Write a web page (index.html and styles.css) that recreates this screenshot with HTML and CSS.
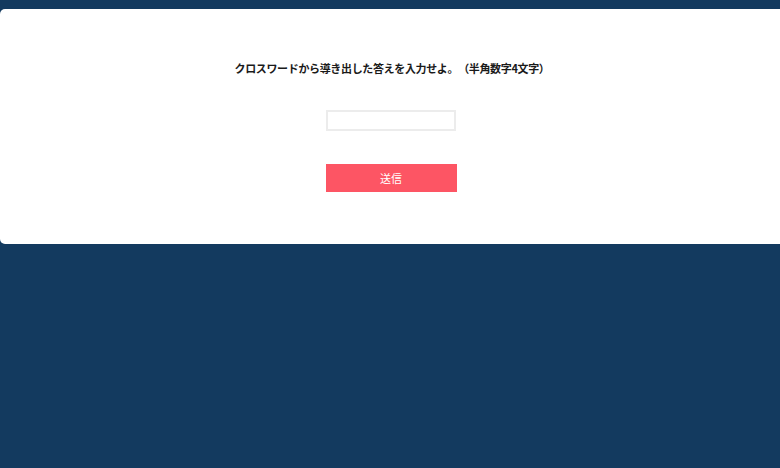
FILE: index.html
```html
<!DOCTYPE html>
<html lang="ja">
<head>
<meta charset="utf-8">
<link rel="stylesheet" href="styles.css">
</head>
<body>
<div class="page">
  <main class="card">
    <p class="question">クロスワードから導き出した答えを入力せよ。（半角数字4文字）</p>
    <form class="answer-form" onsubmit="return false;">
      <input class="answer-input" type="text" aria-label="答え">
      <button class="submit-btn" type="submit">送信</button>
    </form>
  </main>
</div>
</body>
</html>
```

FILE: styles.css
```css
html, body {
  margin: 0;
  padding: 0;
  background: #133a5f;
  height: 100%;
}
body {
  font-family: "Noto Sans CJK JP", "Noto Sans", sans-serif;
  color: #222;
}
.page {
  padding-top: 9px;
}
.card {
  background: #ffffff;
  border-radius: 5px 0 0 5px;
  height: 235px;
  display: flex;
  flex-direction: column;
  align-items: center;
  box-sizing: border-box;
  padding-top: 50px;
}
.question {
  margin: 0;
  font-size: 11px;
  font-weight: 700;
  line-height: 18px;
  color: #1a1a1a;
  letter-spacing: -0.35px;
  padding-left: 4px;
  text-spacing-trim: space-all;
}
.answer-form {
  display: flex;
  flex-direction: column;
  align-items: center;
  margin-top: 33px;
  gap: 33px;
}
.answer-input {
  width: 130px;
  height: 21px;
  box-sizing: border-box;
  border: 2px solid #ececec;
  background: #fff;
  margin: 0 0 0 2px;
  padding: 0 4px;
  outline: none;
}
.submit-btn {
  width: 131px;
  height: 28px;
  margin: 0 0 0 2px;
  border: none;
  background: #fd5564;
  color: #fff;
  font-family: "Noto Sans CJK JP", sans-serif;
  font-size: 11px;
  padding: 0;
  cursor: pointer;
}
```
